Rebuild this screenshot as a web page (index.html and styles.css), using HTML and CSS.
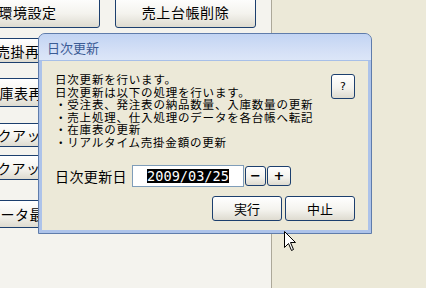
FILE: index.html
```html
<!DOCTYPE html>
<html lang="ja">

<head>
  <meta charset="UTF-8" />
  <meta name="viewport" content="width=device-width, initial-scale=1.0" />
  <title>日次更新</title>
  <link rel="stylesheet" href="styles.css">
</head>

<body>
  <div class="screen">
    <div class="panel">
      <div class="top-row">
        <button class="btn btn-env">環境設定</button>
        <button class="btn btn-del">売上台帳削除</button>
      </div>
      <div class="side">
        <button class="btn side-btn s1">売掛再計算</button>
        <button class="btn side-btn s2">在庫表再計算</button>
        <button class="btn side-btn s3">データバックアップ</button>
        <button class="btn side-btn s4">ログバックアップ</button>
        <button class="btn side-btn s5">データ最適化</button>
      </div>
    </div>

    <!-- 日次更新ダイアログ -->
    <div class="dialog">
      <div class="dialog-title">日次更新</div>
      <div class="dialog-body">
        <div class="info">
          <div class="info-text">
            <p>日次更新を行います。</p>
            <p>日次更新は以下の処理を行います。</p>
            <p>・受注表、発注表の納品数量、入庫数量の更新</p>
            <p>・売上処理、仕入処理のデータを各台帳へ転記</p>
            <p>・在庫表の更新</p>
            <p>・リアルタイム売掛金額の更新</p>
          </div>
          <button class="btn help">?</button>
        </div>
        <div class="date-row">
          <span class="date-label">日次更新日</span>
          <div class="date-input"><span class="selected">2009/03/25</span></div>
          <button class="btn spin minus">−</button>
          <button class="btn spin plus">+</button>
        </div>
        <div class="actions">
          <button class="btn action">実行</button>
          <button class="btn action">中止</button>
        </div>
      </div>
    </div>

    <svg class="cursor" width="13" height="21" viewBox="0 0 13 21">
      <path d="M0.5 0.5 V16.5 L4.5 12.5 L7.5 19.5 L9.5 18.5 L6.5 11.5 L11.5 11.5 Z" fill="#fff" stroke="#000" stroke-width="1" stroke-linejoin="miter" />
    </svg>
  </div>
</body>

</html>
```

FILE: styles.css
```css
* {
  box-sizing: border-box;
}

body {
  margin: 0;
  font-family: "Noto Sans CJK JP", sans-serif;
  color: #000;
}

.screen {
  position: relative;
  width: 426px;
  height: 288px;
  overflow: hidden;
  background: #ece9d8;
  display: flex;
}

.panel {
  width: 272px;
  height: 100%;
  background: #f4f3ee;
  border-right: 1px solid #aca899;
  overflow: hidden;
}

.btn {
  appearance: none;
  margin: 0;
  padding: 0;
  font-family: "Noto Sans CJK JP", sans-serif;
  color: #000;
  border: 1px solid #1c3f6e;
  border-radius: 3px;
  background: linear-gradient(#ffffff, #f4f3ee 55%, #dedbd0);
  cursor: pointer;
}

.top-row {
  display: flex;
  gap: 15px;
  margin-top: -4px;
}

.top-row .btn {
  height: 32px;
  font-size: 14px;
  letter-spacing: 0.6px;
}

.btn-env {
  margin-left: -45px;
  width: 145px;
}

.btn-del {
  width: 141px;
}

.side {
  display: flex;
  flex-direction: column;
  margin-top: 10px;
  margin-left: -80px;
}

.side-btn {
  width: 200px;
  font-size: 14px;
  letter-spacing: 0.5px;
  text-align: left;
  white-space: nowrap;
}

.s1 {
  height: 25px;
  padding-left: 75px;
}

.s2 {
  height: 29px;
  margin-top: 15px;
  padding-left: 64px;
}

.s3 {
  height: 24px;
  margin-top: 16px;
  padding-left: 4px;
}

.s4 {
  height: 25px;
  margin-top: 8px;
  padding-left: 18px;
}

.s5 {
  height: 28px;
  margin-top: 20px;
  padding-left: 65px;
}

/* dialog */
.dialog {
  position: absolute;
  left: 38px;
  top: 33px;
  width: 334px;
  height: 201px;
  display: flex;
  flex-direction: column;
  border: 1px solid #5f7cab;
  border-radius: 7px 7px 0 0;
  background: #adc3ea;
}

.dialog-title {
  height: 27px;
  padding-left: 8px;
  display: flex;
  align-items: center;
  font-size: 13px;
  color: #3b5b95;
  border-radius: 6px 6px 0 0;
  background: linear-gradient(#c2d4f3, #d3dff6 60%, #dce6f8);
  border-bottom: 1px solid #a7bfe8;
}

.dialog-body {
  flex: 1;
  margin: 0 3px 3px 3px;
  background: #ece9d8;
  padding: 12px 13px 0 13px;
  display: flex;
  flex-direction: column;
}

.info {
  display: flex;
  justify-content: space-between;
  align-items: flex-start;
}

.info-text p {
  margin: 0;
  font-size: 11.5px;
  line-height: 12.6px;
  letter-spacing: 0.8px;
  white-space: nowrap;
}

.help {
  width: 24px;
  height: 25px;
  margin-top: 1px;
  font-family: "DejaVu Sans", sans-serif;
  font-size: 11px;
}

.date-row {
  display: flex;
  align-items: center;
  margin-top: 16px;
  height: 22px;
}

.date-label {
  font-size: 14px;
  letter-spacing: 0.4px;
  width: 77px;
}

.date-input {
  width: 112px;
  height: 22px;
  background: #fff;
  border: 1px solid #7f9db9;
  display: flex;
  align-items: center;
  justify-content: center;
}

.selected {
  background: #000;
  color: #fff;
  font-family: "DejaVu Sans Mono", monospace;
  font-size: 13.6px;
  line-height: 14px;
}

.spin {
  height: 20px;
  margin-left: 1px;
  font-family: "DejaVu Sans", sans-serif;
  font-weight: bold;
  font-size: 13px;
}

.minus {
  width: 21px;
}

.plus {
  width: 24px;
}

.actions {
  display: flex;
  justify-content: flex-end;
  gap: 3px;
  margin-top: 9px;
}

.action {
  width: 70px;
  height: 25px;
  font-size: 13px;
}

.cursor {
  position: absolute;
  left: 284px;
  top: 231px;
}
```
